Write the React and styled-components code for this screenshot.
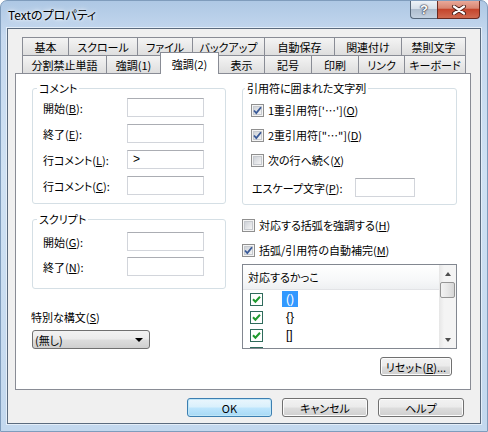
import React from 'react'
import styled, { createGlobalStyle } from 'styled-components'

const GlobalStyle = createGlobalStyle`
  html, body {
    margin: 0;
    padding: 0;
    background: #ffffff;
  }
  body {
    font-family: "Noto Sans CJK JP", "Noto Sans", sans-serif;
    font-size: 11px;
    font-feature-settings: "palt";
    color: #000;
  }
  * { box-sizing: border-box; }
`

const Window = styled.div`
  width: 488px;
  height: 432px;
  display: flex;
  flex-direction: column;
  padding: 0 6px 7px 6px;
  border: 1px solid #7f9cbc;
  border-radius: 7px 7px 0 0;
  background: linear-gradient(180deg, #aec8e4 0%, #c6d9ef 8%, #cfe1f3 40%, #c3d8ee 100%);
`

const TitleBar = styled.div`
  height: 27px;
  display: flex;
  align-items: flex-start;
`

const Title = styled.div`
  align-self: center;
  padding-left: 1px;
  font-size: 12px;
  line-height: 14px;
  text-shadow: 0 0 6px #fff, 0 0 3px #fff;
`

const Caption = styled.div`
  margin-left: auto;
  margin-right: 1px;
  display: flex;
`

const HelpButton = styled.div`
  width: 27px;
  height: 18px;
  border: 1px solid #56677a;
  border-top: none;
  border-right: none;
  border-radius: 0 0 0 4px;
  background: linear-gradient(180deg, #eef2f7 0%, #d6dfe9 45%, #aebdce 50%, #c3d1e0 100%);
  display: flex;
  align-items: center;
  justify-content: center;
  font-family: "Liberation Sans", sans-serif;
  font-weight: bold;
  font-size: 13px;
  color: #fff;
  text-shadow: 0 0 1px #334, 0 0 1px #334, 0 0 2px #334;
`

const CloseButton = styled.div`
  width: 43px;
  height: 18px;
  border: 1px solid #6a2a20;
  border-top: none;
  border-radius: 0 0 4px 0;
  background: linear-gradient(180deg, #e9a899 0%, #d88672 42%, #c5452c 50%, #d06a50 100%);
  display: flex;
  align-items: center;
  justify-content: center;
`

const Client = styled.div`
  flex: 1;
  display: flex;
  flex-direction: column;
  border: 1px solid #5b6b7e;
  box-shadow: 0 0 0 1px #e4eef9;
  background: #f0f0f0;
  padding: 8px 9px 6px 7px;
`

const TabStrip = styled.div`
  padding-left: 7px;
`

const TabRow = styled.div`
  display: flex;
  height: 18px;
  align-items: flex-start;
`

const Tab = styled.div`
  width: ${(p) => p.$w}px;
  height: ${(p) => (p.$active ? 22 : 18)}px;
  margin-top: ${(p) => (p.$active ? -3 : 0)}px;
  margin-right: ${(p) => (p.$active ? -1 : 0)}px;
  position: ${(p) => (p.$active ? 'relative' : 'static')};
  z-index: ${(p) => (p.$active ? 2 : 'auto')};
  border: 1px solid #898c95;
  border-bottom: none;
  border-right: ${(p) => (p.$active ? '1px solid #898c95' : 'none')};
  background: ${(p) => (p.$active ? '#ffffff' : 'linear-gradient(180deg, #f4f4f4 0%, #e9e9e9 50%, #dedede 100%)')};
  display: flex;
  align-items: center;
  justify-content: center;
  line-height: 14px;
  white-space: nowrap;
  &:last-child {
    border-right: 1px solid #898c95;
  }
`

const Panel = styled.div`
  height: 317px;
  width: 456px;
  border: 1px solid #898c95;
  background: #ffffff;
  padding: 7px 14px 0 16px;
  display: grid;
  grid-template-columns: 194px 215px;
  column-gap: 16px;
  align-items: start;
`

const Column = styled.div`
  display: flex;
  flex-direction: column;
`

const Group = styled.fieldset`
  margin: ${(p) => p.$mt || 0}px 0 0 0;
  padding: ${(p) => p.$pt}px 0 ${(p) => p.$pb}px ${(p) => p.$pl}px;
  border: 1px solid #d5dfe5;
  border-radius: 3px;
  min-width: 0;
  display: flex;
  flex-direction: column;
  gap: ${(p) => p.$gap}px;
`

const Legend = styled.legend`
  padding: 0 2px;
  margin-left: -6px;
  line-height: 14px;
`

const FieldRow = styled.div`
  display: flex;
  align-items: center;
  height: 19px;
`

const Label = styled.div`
  width: ${(p) => p.$w}px;
  padding-left: ${(p) => p.$pl || 0}px;
  line-height: 14px;
  white-space: nowrap;
`

const TextBox = styled.div`
  width: ${(p) => p.$w}px;
  height: 19px;
  border: 1px solid #d2d5db;
  border-top-color: #abadb3;
  background: #fff;
  padding-left: 5px;
  line-height: 17px;
  font-family: "Liberation Sans", sans-serif;
  font-size: 12px;
`

const CheckRow = styled.div`
  display: flex;
  align-items: center;
  gap: 4px;
  height: 14px;
  margin-top: ${(p) => p.$mt || 0}px;
  line-height: 14px;
  white-space: nowrap;
`

const PlainLabel = styled.div`
  line-height: 14px;
  margin-top: ${(p) => p.$mt}px;
  margin-left: -1px;
`

const Combo = styled.div`
  margin-top: 6px;
  width: 118px;
  height: 19px;
  border: 1px solid #707070;
  border-radius: 3px;
  background: linear-gradient(180deg, #f2f2f2 0%, #ebebeb 48%, #dddddd 52%, #cfcfcf 100%);
  display: flex;
  align-items: center;
  padding: 0 6px 0 2px;
  line-height: 14px;
`

const ComboArrow = styled.span`
  margin-left: auto;
  width: 0;
  height: 0;
  border-left: 4px solid transparent;
  border-right: 4px solid transparent;
  border-top: 4px solid #000;
`

const ListBox = styled.div`
  margin-top: 7px;
  height: 85px;
  border: 1px solid #828790;
  background: #fff;
  display: flex;
  overflow: hidden;
`

const ListMain = styled.div`
  flex: 1;
  display: flex;
  flex-direction: column;
  overflow: hidden;
`

const ListHeader = styled.div`
  height: 25px;
  flex-shrink: 0;
  border-bottom: 1px solid #e2e3e6;
  background: linear-gradient(180deg, #ffffff 0%, #f7f8f9 60%, #eef0f2 100%);
  padding-left: 5px;
  display: flex;
  align-items: center;
  line-height: 14px;
`

const ListRow = styled.div`
  height: 18px;
  flex-shrink: 0;
  display: flex;
  align-items: center;
  padding-left: 7px;
`

const ItemText = styled.span`
  margin-left: 19px;
  padding: 0 4px;
  line-height: 16px;
  font-family: "Liberation Sans", sans-serif;
  font-size: 12px;
  background: ${(p) => (p.$selected ? '#3399ff' : 'transparent')};
  color: ${(p) => (p.$selected ? '#fff' : '#000')};
`

const ScrollBar = styled.div`
  width: 17px;
  display: flex;
  flex-direction: column;
  background: linear-gradient(90deg, #e6e6e6 0%, #f4f4f4 30%, #f4f4f4 100%);
`

const ScrollArrow = styled.div`
  height: 17px;
  display: flex;
  align-items: center;
  justify-content: center;
  &::before {
    content: '';
    width: 0;
    height: 0;
    border-left: 3.5px solid transparent;
    border-right: 3.5px solid transparent;
    ${(p) => (p.$up ? 'border-bottom: 4px solid #4d4d4d;' : 'border-top: 4px solid #4d4d4d;')}
  }
`

const Thumb = styled.div`
  height: 16px;
  margin: 0 1px;
  border: 1px solid #959595;
  border-radius: 2px;
  background: linear-gradient(90deg, #f3f3f3 0%, #e7e7e7 50%, #d6d6d6 100%);
`

const ScrollSpace = styled.div`
  flex: 1;
`

const Button = styled.div`
  width: ${(p) => p.$w}px;
  height: 19px;
  border: 1px solid ${(p) => (p.$default ? '#3c7fb1' : '#707070')};
  border-radius: 3px;
  background: ${(p) =>
    p.$default
      ? 'linear-gradient(180deg, #eaf6fd 0%, #d9f0fc 48%, #bee6fd 52%, #a7d9f5 100%)'
      : 'linear-gradient(180deg, #f2f2f2 0%, #ebebeb 48%, #dddddd 52%, #cfcfcf 100%)'};
  box-shadow: ${(p) => (p.$default ? 'inset 0 0 0 1px #bfe6f8' : 'inset 0 0 0 1px #fcfcfc')};
  display: flex;
  align-items: center;
  justify-content: center;
  line-height: 14px;
  white-space: nowrap;
`

const ResetButton = styled(Button)`
  margin-top: 8px;
  align-self: flex-end;
  margin-right: 5px;
`

const ButtonRow = styled.div`
  margin-top: 8px;
  display: flex;
  justify-content: flex-end;
  gap: 10px;
  padding-right: 7px;
`

const CheckBox = ({ checked }) => (
  <svg width="13" height="13" viewBox="0 0 13 13" style={{ flexShrink: 0 }}>
    <defs>
      <linearGradient id="cbfill" x1="0" y1="0" x2="1" y2="1">
        <stop offset="0" stopColor="#cbcfd5" />
        <stop offset="1" stopColor="#f7f7f7" />
      </linearGradient>
    </defs>
    <rect x="0.5" y="0.5" width="12" height="12" fill="#f4f4f4" stroke="#8f8f8f" />
    <rect x="2.5" y="2.5" width="8" height="8" fill="url(#cbfill)" stroke="#c6c9ce" />
    {checked && (
      <path d="M3 6.5 L5.3 9 L10 3.2" fill="none" stroke="#3a5a98" strokeWidth="1.8" />
    )}
  </svg>
)

const StateCheck = () => (
  <svg width="13" height="13" viewBox="0 0 13 13" style={{ flexShrink: 0 }}>
    <rect x="0.5" y="0.5" width="12" height="12" fill="#fff" stroke="#2f6b5c" />
    <path d="M3 6.3 L5.4 8.8 L10 3.8" fill="none" stroke="#1f9a2e" strokeWidth="2" />
  </svg>
)

const CloseGlyph = () => (
  <svg width="16" height="10" viewBox="0 0 16 10">
    <path d="M3 1.5 L13 8.5 M13 1.5 L3 8.5" stroke="#4a1e18" strokeWidth="4" strokeLinecap="round" />
    <path d="M3 1.5 L13 8.5 M13 1.5 L3 8.5" stroke="#ffffff" strokeWidth="2.2" strokeLinecap="round" />
  </svg>
)

const row1 = [
  ['基本', 46],
  ['スクロール', 69],
  ['ファイル', 55],
  ['バックアップ', 72],
  ['自動保存', 70],
  ['関連付け', 67],
  ['禁則文字', 65]
]

const row2 = [
  ['分割禁止単語', 84],
  ['強調(1)', 54],
  ['強調(2)', 59, true],
  ['表示', 46],
  ['記号', 47],
  ['印刷', 47],
  ['リンク', 46],
  ['キーボード', 62]
]

const brackets = [
  { text: '()', selected: true },
  { text: '{}' },
  { text: '[]' },
  { text: '' }
]

const App = () => {
  return (
    <>
      <GlobalStyle />
      <Window>
        <TitleBar>
          <Title>Textのプロパティ</Title>
          <Caption>
            <HelpButton>?</HelpButton>
            <CloseButton>
              <CloseGlyph />
            </CloseButton>
          </Caption>
        </TitleBar>
        <Client>
          <TabStrip>
            <TabRow>
              {row1.map(([name, w]) => (
                <Tab key={name} $w={w}>
                  {name}
                </Tab>
              ))}
            </TabRow>
            <TabRow>
              {row2.map(([name, w, active]) => (
                <Tab key={name} $w={w} $active={active}>
                  {name}
                </Tab>
              ))}
            </TabRow>
          </TabStrip>
          <Panel>
            <Column>
              <Group $pt={3} $pb={8} $pl={10} $gap={7}>
                <Legend>コメント</Legend>
                <FieldRow>
                  <Label $w={84}>開始(<u>B</u>):</Label>
                  <TextBox $w={77} />
                </FieldRow>
                <FieldRow>
                  <Label $w={84}>終了(<u>E</u>):</Label>
                  <TextBox $w={77} />
                </FieldRow>
                <FieldRow>
                  <Label $w={84}>行コメント(<u>L</u>):</Label>
                  <TextBox $w={77}>&gt;</TextBox>
                </FieldRow>
                <FieldRow>
                  <Label $w={84}>行コメント(<u>C</u>):</Label>
                  <TextBox $w={77} />
                </FieldRow>
              </Group>
              <Group $mt={8} $pt={6} $pb={12} $pl={10} $gap={6}>
                <Legend>スクリプト</Legend>
                <FieldRow>
                  <Label $w={84}>開始(<u>G</u>):</Label>
                  <TextBox $w={77} />
                </FieldRow>
                <FieldRow>
                  <Label $w={84}>終了(<u>N</u>):</Label>
                  <TextBox $w={77} />
                </FieldRow>
              </Group>
              <PlainLabel $mt={21}>特別な構文(<u>S</u>)</PlainLabel>
              <Combo>
                <span>(無し)</span>
                <ComboArrow />
              </Combo>
            </Column>
            <Column>
              <Group $pt={8} $pb={7} $pl={8} $gap={11}>
                <Legend>引用符に囲まれた文字列</Legend>
                <CheckRow>
                  <CheckBox checked />
                  <span>1重引用符['…'](<u>O</u>)</span>
                </CheckRow>
                <CheckRow>
                  <CheckBox checked />
                  <span>2重引用符["…"](<u>D</u>)</span>
                </CheckRow>
                <CheckRow>
                  <CheckBox />
                  <span>次の行へ続く(<u>X</u>)</span>
                </CheckRow>
                <FieldRow>
                  <Label $w={104} $pl={1}>エスケープ文字(<u>P</u>):</Label>
                  <TextBox $w={60} />
                </FieldRow>
              </Group>
              <CheckRow $mt={13}>
                <CheckBox />
                <span>対応する括弧を強調する(<u>H</u>)</span>
              </CheckRow>
              <CheckRow $mt={11}>
                <CheckBox checked />
                <span>括弧/引用符の自動補完(<u>M</u>)</span>
              </CheckRow>
              <ListBox>
                <ListMain>
                  <ListHeader>対応するかっこ</ListHeader>
                  {brackets.map((b, i) => (
                    <ListRow key={i}>
                      <StateCheck />
                      {b.text && <ItemText $selected={b.selected}>{b.text}</ItemText>}
                    </ListRow>
                  ))}
                </ListMain>
                <ScrollBar>
                  <ScrollArrow $up />
                  <Thumb />
                  <ScrollSpace />
                  <ScrollArrow />
                </ScrollBar>
              </ListBox>
              <ResetButton $w={72}>リセット(<u>R</u>)...</ResetButton>
            </Column>
          </Panel>
          <ButtonRow>
            <Button $w={85} $default>
              OK
            </Button>
            <Button $w={86}>キャンセル</Button>
            <Button $w={86}>ヘルプ</Button>
          </ButtonRow>
        </Client>
      </Window>
    </>
  )
}

export default App
